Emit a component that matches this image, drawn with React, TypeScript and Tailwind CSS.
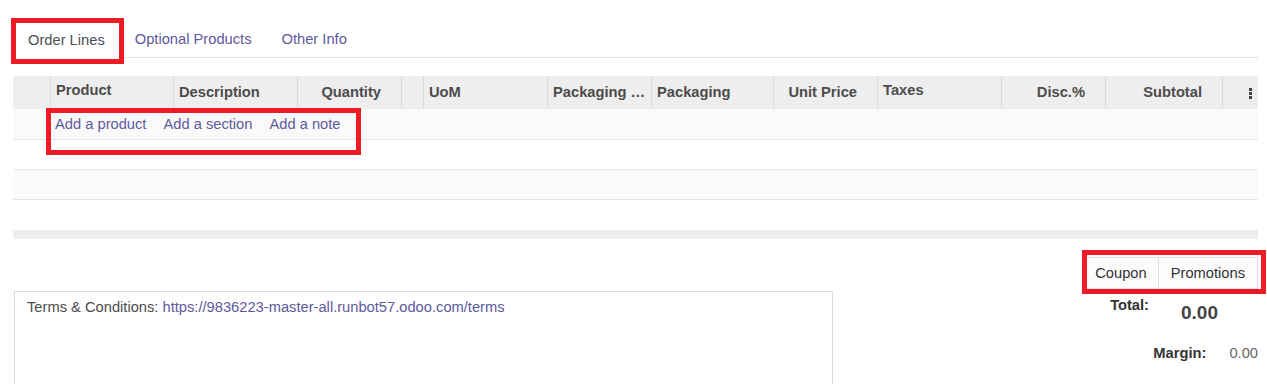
import React from "react";

// Order form: lines table, tabs and totals
type Col = {
  label: string;
  width: string;
  align: "left" | "right";
  high?: boolean;
};

const columns: Col[] = [
  { label: "", width: "w-[38px]", align: "left" },
  { label: "Product", width: "w-[123px]", align: "left", high: true },
  { label: "Description", width: "w-[124px]", align: "left" },
  { label: "Quantity", width: "w-[104px]", align: "right" },
  { label: "", width: "w-[22px]", align: "left" },
  { label: "UoM", width: "w-[124px]", align: "left" },
  { label: "Packaging …", width: "w-[104px]", align: "left" },
  { label: "Packaging", width: "w-[122px]", align: "left" },
  { label: "Unit Price", width: "w-[104px]", align: "right" },
  { label: "Taxes", width: "w-[124px]", align: "left", high: true },
  { label: "Disc.%", width: "w-[104px]", align: "right" },
  { label: "Subtotal", width: "w-[117px]", align: "right" },
];

function RedBox({ className }: { className: string }) {
  return (
    <div
      className={`pointer-events-none absolute border-[5px] border-[#ed1c24] ${className}`}
    />
  );
}

function Tabs() {
  return (
    <div className="flex h-[37px] items-end border-b border-[#dee2e6]">
      <div className="-mb-px flex h-[37px] items-center border-x border-t border-[#dee2e6] bg-white px-[14px] text-[#495057]">
        Order Lines
      </div>
      <div className="flex h-[36px] items-center px-[15px] text-[#5e5a9c]">
        Optional Products
      </div>
      <div className="flex h-[36px] items-center px-[15px] text-[#5e5a9c]">
        Other Info
      </div>
    </div>
  );
}

function LinesTable() {
  return (
    <div className="mt-[18px] w-[1245px]">
      <div className="flex h-[33px] bg-[#eeeeee] font-bold text-[#4c4c4c]">
        {columns.map((c, i) => (
          <div
            key={i}
            className={`${c.width} shrink-0 border-r border-[#dcdcdc] ${
              c.align === "right" ? "pr-[20px] text-right" : "pl-[5px]"
            } ${c.high ? "pt-[6px]" : "pt-[8px]"} whitespace-nowrap`}
          >
            {c.label}
          </div>
        ))}
        <div className="flex w-[35px] shrink-0 flex-col items-start justify-center gap-[1px] pl-[26px] pt-[1px]">
          <span className="h-[3px] w-[3px] bg-[#444]" />
          <span className="h-[3px] w-[3px] bg-[#444]" />
          <span className="h-[3px] w-[3px] bg-[#444]" />
        </div>
      </div>
      <div className="flex h-[31px] items-center gap-[17px] border-b border-[#e6e6e6] bg-[#fafafa] pl-[42px] text-[#5e5a9c]">
        <span>Add a product</span>
        <span>Add a section</span>
        <span>Add a note</span>
      </div>
      <div className="h-[30px] border-b border-[#e6e6e6] bg-white" />
      <div className="h-[30px] border-b border-[#e6e6e6] bg-[#fbfbfb]" />
      <div className="h-[30px] bg-white" />
      <div className="h-[9px] bg-[#eeeeee]" />
    </div>
  );
}

function Footer() {
  return (
    <div className="mt-[18px] w-[1245px]">
      <div className="flex justify-end">
        <div className="flex h-[32px] text-[#333]">
          <button className="border border-[#dee2e6] bg-[#fcfcfc] px-[11px]">
            Coupon
          </button>
          <button className="-ml-px border border-[#dee2e6] bg-[#fcfcfc] px-[12px]">
            Promotions
          </button>
        </div>
      </div>
      <div className="mt-[2px] flex justify-between">
        <div className="ml-[1px] h-[120px] w-[819px] border border-[#d9d9d9] px-[12px] pt-[7px] text-[#4c4c4c]">
          Terms &amp; Conditions:{" "}
          <span className="text-[#5e5a9c]">
            https://9836223-master-all.runbot57.odoo.com/terms
          </span>
        </div>
        <div className="flex flex-col">
          <div className="flex items-start justify-end">
            <span className="pt-[6px] font-bold text-[#333]">Total:</span>
            <span className="pl-[32px] pr-[40px] pt-[11px] text-[19px] font-bold leading-[22px] text-[#444]">
              0.00
            </span>
          </div>
          <div className="mt-[21px] flex justify-end">
            <span className="font-bold text-[#333]">Margin:</span>
            <span className="pl-[23px] text-[#666]">0.00</span>
          </div>
        </div>
      </div>
    </div>
  );
}

export default function App() {
  return (
    <div className="relative h-[384px] w-[1267px] overflow-hidden bg-white pl-[13px] pt-[21px] font-['Liberation_Sans',Arial,sans-serif] text-[14.7px] leading-[17px]">
      <div className="w-[1245px]">
        <Tabs />
      </div>
      <LinesTable />
      <Footer />

      <RedBox className="left-[11px] top-[18px] h-[46px] w-[113px]" />
      <RedBox className="left-[46px] top-[108px] h-[47px] w-[315px]" />
      <RedBox className="left-[1082px] top-[250px] h-[44px] w-[184px]" />
    </div>
  );
}
